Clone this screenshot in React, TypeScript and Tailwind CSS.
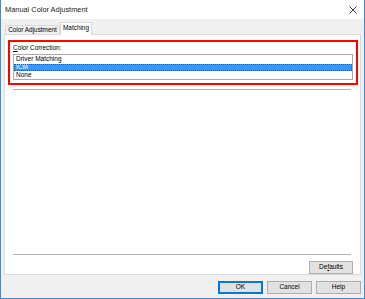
import React, { useState } from 'react';

const FONT = "font-['Liberation_Sans',Arial,sans-serif]";

const Button: React.FC<{ label: React.ReactNode; primary?: boolean; className?: string }> = ({ label, primary, className }) => (
  <button
    className={`h-[13px] flex items-center justify-center bg-[#e1e1e1] text-[6.5px] text-black leading-none ${
      primary ? 'border border-[#0078d7] shadow-[inset_0_0_0_1px_#0078d7]' : 'border border-[#adadad]'
    } ${className ?? ''}`}
  >
    {label}
  </button>
);

const App: React.FC = () => {
  const [selected, setSelected] = useState<string>('ICM');
  const options = ['Driver Matching', 'ICM', 'None'];

  return (
    <div className={`w-[365px] h-[299px] flex flex-col bg-[#f0f0f0] border-l border-r border-b border-[#3c8ddc] text-black ${FONT}`}>
      {/* Title bar */}
      <div className="h-[19px] bg-white flex items-center justify-between pl-[4px] pr-[7px]">
        <span className="text-[7.4px] text-[#1a1a1a]">Manual Color Adjustment</span>
        <svg width="8" height="8" viewBox="0 0 8 8">
          <path d="M0.5 0.5 L7.5 7.5 M7.5 0.5 L0.5 7.5" stroke="#222" strokeWidth="0.9" />
        </svg>
      </div>

      <div className="flex-1 flex flex-col px-[3px]">
        {/* Tabs */}
        <div className="mt-[3px] h-[12px] flex items-end pl-[1px] relative z-10">
          <div className="h-[9px] w-[55px] flex items-center justify-center border border-b-0 border-[#d9d9d9] bg-[#f0f0f0] text-[6.4px] leading-none">
            Color Adjustment
          </div>
          <div className="h-[13px] -mb-px w-[32px] flex items-start pt-[2px] justify-center border border-b-0 border-[#d9d9d9] bg-white text-[6.4px] leading-none">
            Matching
          </div>
        </div>

        {/* Panel */}
        <div className="h-[241px] border border-[#d9d9d9] bg-white flex flex-col">
          <div className="mt-[5px] ml-[3px] mr-[2px] h-[45px] border-2 border-[#ff0000] flex flex-col pl-[3px] pr-[3px]">
            <div className="mt-[3px] text-[6.4px] leading-none"><span className="underline">C</span>olor Correction:</div>
            <div className="mt-[3px] h-[26px] border border-[#a8a8a8] bg-white flex flex-col py-[0.5px]">
              {options.map(o => (
                <div
                  key={o}
                  onClick={() => setSelected(o)}
                  className={`h-[8px] flex items-center pl-[2px] text-[6.5px] leading-none ${
                    selected === o ? 'bg-[#3399ff] text-white outline outline-1 outline-dotted outline-[#1f5fa8] -outline-offset-1' : ''
                  }`}
                >
                  {o}
                </div>
              ))}
            </div>
          </div>

          <div className="mt-[4px] ml-[8px] mr-[9px] h-px bg-[#b0b0b0]" />
          <div className="flex-1" />
          <div className="ml-[8px] mr-[9px] h-px bg-[#b0b0b0]" />

          <div className="mt-[6px] flex justify-end mr-[7px]">
            <Button label={<>De<span className="underline">f</span>aults</>} className="w-[44px]" />
          </div>
        </div>

        {/* Bottom buttons */}
        <div className="mt-[6px] flex justify-end gap-[4px]">
          <Button label="OK" primary className="w-[45px]" />
          <Button label="Cancel" className="w-[45px]" />
          <Button label="Help" className="w-[45px]" />
        </div>
      </div>
    </div>
  );
};

export default App;
